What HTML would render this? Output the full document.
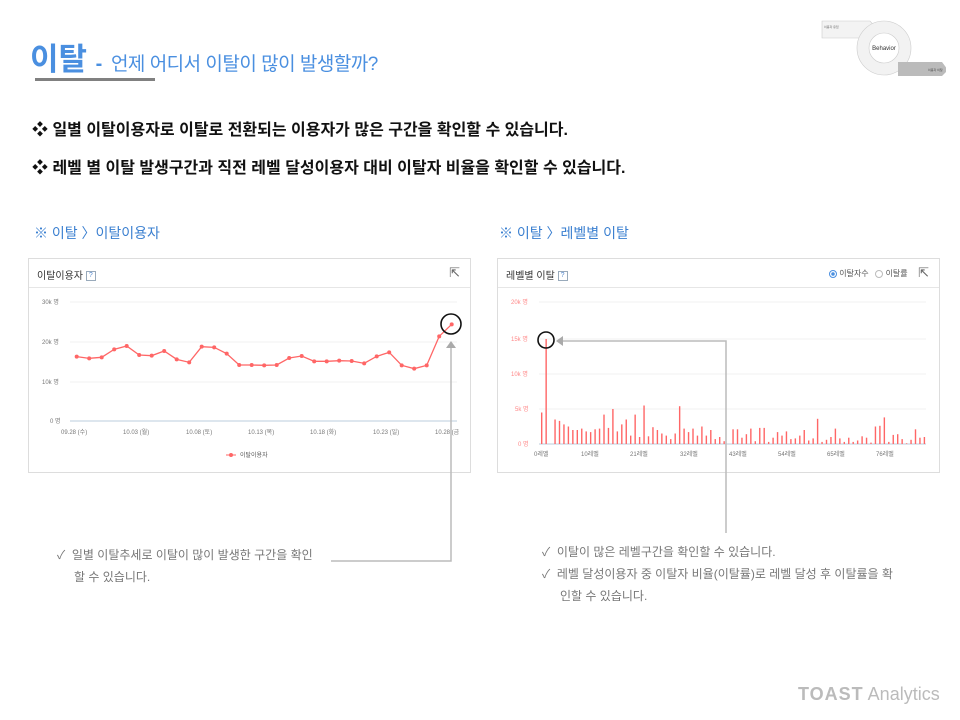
<!DOCTYPE html>
<html><head><meta charset="utf-8"><style>
body{margin:0;width:960px;height:720px;background:#fff;position:relative;overflow:hidden;font-family:"Liberation Sans","Noto Sans CJK KR",sans-serif}
.a{position:absolute;white-space:nowrap}
.box{position:absolute;border:1px solid #ddd;background:#fff}
.hd{position:absolute;left:0;right:0;top:0;height:28px;border-bottom:1px solid #e6e6e6}
.q{display:inline-block;width:8px;height:8px;border:1px solid #9ab;font-size:7px;line-height:8px;text-align:center;color:#58c;vertical-align:middle}
.n{color:#777;font-size:12px}
</style></head><body>
<div class="a" style="left:30px;top:34px;color:#4a8fe0;font-size:31px;font-weight:bold">이탈 <span style="font-size:20px">-</span> <span style="font-size:19px;font-weight:normal;letter-spacing:-0.5px">언제 어디서 이탈이 많이 발생할까?</span></div>
<div class="a" style="left:35px;top:78px;width:120px;height:3px;background:#808080"></div>

<svg class="a" style="left:818px;top:16px" width="128" height="64" viewBox="0 0 128 64">
<path d="M4 5 H52 L60 14 L52 22 H4Z" fill="#f3f3f3" stroke="#ccc" stroke-width=".6"/>
<circle cx="66" cy="32" r="27" fill="#f2f2f2" stroke="#ccc" stroke-width=".6"/>
<circle cx="66" cy="32" r="15" fill="#fff" stroke="#ccc" stroke-width=".6"/>
<path d="M80 46 H124 L130 54 L124 60 H80Z" fill="#bbb"/>
<text x="66" y="34" font-size="6" text-anchor="middle" fill="#333">Behavior</text>
<text x="6" y="12" font-size="3" fill="#666">이용자 유입</text>
<text x="110" y="55" font-size="3" fill="#444">이용자 이탈</text>
</svg>

<div class="a" style="left:32px;top:116px;font-size:16px;font-weight:bold;color:#111">❖ 일별 이탈이용자로 이탈로 전환되는 이용자가 많은 구간을 확인할 수 있습니다.</div>
<div class="a" style="left:32px;top:154px;font-size:16px;font-weight:bold;color:#111">❖ 레벨 별 이탈 발생구간과 직전 레벨 달성이용자 대비 이탈자 비율을 확인할 수 있습니다.</div>
<div class="a" style="left:34px;top:223px;font-size:14px;color:#3a7fd0">※ 이탈 〉이탈이용자</div>
<div class="a" style="left:499px;top:223px;font-size:14px;color:#3a7fd0">※ 이탈 〉레벨별 이탈</div>

<div class="box" style="left:28px;top:258px;width:441px;height:213px"><div class="hd"><span class="a" style="left:8px;top:8px;font-size:10px;color:#333">이탈이용자 <span class="q">?</span></span><span class="a" style="right:10px;top:6px;font-size:13px;color:#666">⇱</span></div></div>
<div class="box" style="left:497px;top:258px;width:441px;height:213px"><div class="hd"><span class="a" style="left:8px;top:8px;font-size:10px;color:#333">레벨별 이탈 <span class="q">?</span></span>
<span class="a" style="left:331px;top:9px;font-size:8px;color:#555"><span style="display:inline-block;width:6px;height:6px;border:1px solid #4a8fe0;border-radius:50%;background:radial-gradient(#4a8fe0 40%,#fff 45%);vertical-align:middle"></span> 이탈자수 &nbsp; <span style="display:inline-block;width:6px;height:6px;border:1px solid #bbb;border-radius:50%;vertical-align:middle"></span> 이탈률</span>
<span class="a" style="right:10px;top:6px;font-size:13px;color:#666">⇱</span></div></div>

<svg class="a" style="left:0;top:0" width="960" height="720" id="s">
<g font-size="6" fill="#777" font-family="Liberation Sans,Noto Sans CJK KR,sans-serif">
<line x1="70" y1="302" x2="457" y2="302" stroke="#f0f0f0"/><line x1="70" y1="342" x2="457" y2="342" stroke="#f0f0f0"/><line x1="70" y1="382" x2="457" y2="382" stroke="#f0f0f0"/><line x1="70" y1="421" x2="457" y2="421" stroke="#bcd"/>
<text x="42" y="304">30k 명</text><text x="42" y="344">20k 명</text><text x="42" y="384">10k 명</text><text x="50" y="423">0 명</text>
<text x="61" y="434">09.28 (수)</text><text x="123" y="434">10.03 (월)</text><text x="186" y="434">10.08 (토)</text><text x="248" y="434">10.13 (목)</text><text x="310" y="434">10.18 (화)</text><text x="373" y="434">10.23 (일)</text><text x="435" y="434">10.28 (금</text>
<line x1="226" y1="455" x2="236" y2="455" stroke="#f66"/><circle cx="231" cy="455" r="2" fill="#f66"/><text x="240" y="457" fill="#555">이탈이용자</text>
<g fill="#f88"><text x="511" y="304">20k 명</text><text x="511" y="341">15k 명</text><text x="511" y="376">10k 명</text><text x="515" y="411">5k 명</text><text x="518" y="446">0 명</text></g>
<line x1="539" y1="302" x2="926" y2="302" stroke="#f0f0f0"/><line x1="539" y1="339" x2="926" y2="339" stroke="#f0f0f0"/><line x1="539" y1="374" x2="926" y2="374" stroke="#f0f0f0"/><line x1="539" y1="409" x2="926" y2="409" stroke="#f0f0f0"/><line x1="539" y1="444" x2="926" y2="444" stroke="#bcd"/>
<text x="534" y="456">0레벨</text><text x="581" y="456">10레벨</text><text x="630" y="456">21레벨</text><text x="680" y="456">32레벨</text><text x="729" y="456">43레벨</text><text x="778" y="456">54레벨</text><text x="827" y="456">65레벨</text><text x="876" y="456">76레벨</text>
</g>
<g id="ln"></g><g id="br"></g>
<circle cx="451" cy="324" r="10" fill="none" stroke="#111" stroke-width="1.6"/>
<polyline points="331,561 451,561 451,346" fill="none" stroke="#bbb" stroke-width="1.5"/><path d="M446 348 L451 341 L456 348Z" fill="#aaa"/>
<circle cx="546" cy="340" r="8" fill="none" stroke="#111" stroke-width="1.6"/>
<polyline points="726,533 726,341 560,341" fill="none" stroke="#bbb" stroke-width="1.5"/><path d="M563 336 L556 341 L563 346Z" fill="#aaa"/>
</svg>

<div class="a n" style="left:57px;top:546px">✓ &nbsp;일별 이탈추세로 이탈이 많이 발생한 구간을 확인</div>
<div class="a n" style="left:74px;top:568px">할 수 있습니다.</div>
<div class="a n" style="left:542px;top:543px">✓ &nbsp;이탈이 많은 레벨구간을 확인할 수 있습니다.</div>
<div class="a n" style="left:542px;top:565px">✓ &nbsp;레벨 달성이용자 중 이탈자 비율(이탈률)로 레벨 달성 후 이탈률을 확</div>
<div class="a n" style="left:560px;top:587px">인할 수 있습니다.</div>
<div class="a" style="left:798px;top:684px;font-size:18px;color:#bbb"><b style="letter-spacing:1px">TOAST</b> Analytics</div>
<script>
var ys=[305,310,307,283,273,300,302,288,313,322,275,277,296,330,330,331,330,309,303,319,319,317,318,325,304,292,331,341,331,244,208];
var p=[],h='';ys.forEach(function(y,i){var x=76.7+12.5*i,yy=255+y/3;p.push(x+','+yy);h+='<circle cx="'+x+'" cy="'+yy+'" r="2" fill="#f66"/>';});
document.getElementById('ln').innerHTML='<polyline points="'+p.join(' ')+'" fill="none" stroke="#f66" stroke-width="1.3"/>'+h;
var v=[4.5,15,0,3.5,3.3,2.8,2.5,2,2,2.2,1.8,1.7,2.1,2.2,4.2,2.3,5,1.8,2.8,3.5,1.2,4.2,1,5.5,1.1,2.4,2,1.5,1.2,0.7,1.5,5.4,2.2,1.7,2.2,1.2,2.5,1.2,2,0.7,1,0.4,0,2.1,2.1,0.9,1.4,2.2,0.4,2.3,2.3,0.3,0.9,1.7,1.2,1.8,0.7,0.8,1.2,2,0.5,0.8,3.6,0.3,0.6,1,2.2,0.8,0.3,0.9,0.3,0.5,1.1,0.9,0.2,2.5,2.6,3.8,0.3,1.3,1.4,0.7,0.1,0.6,2.1,0.9,1];
var b='';v.forEach(function(k,i){var x=541+i*4.45,hh=k*7;b+='<rect x="'+x+'" y="'+(444-hh)+'" width="1.4" height="'+hh+'" fill="#f66"/>';});
document.getElementById('br').innerHTML=b;
</script>
</body></html>
